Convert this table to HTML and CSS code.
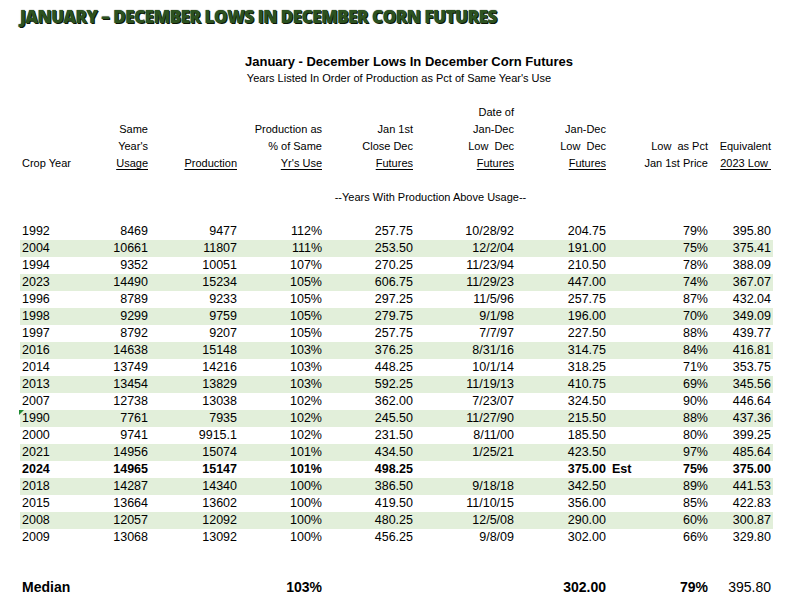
FILE: index.html
```html
<!DOCTYPE html>
<html>
<head>
<meta charset="utf-8">
<link rel="stylesheet" href="styles.css">
</head>
<body>
<h1 class="page-title">JANUARY – DECEMBER LOWS IN DECEMBER CORN FUTURES</h1>
<div class="sheet">
  <div class="t1">January - December Lows In December Corn Futures</div>
  <div class="t2">Years Listed In Order of Production as Pct of Same Year's Use</div>

  <div class="head">
    <div class="row hrow">
      <div class="c l"></div><div class="c"></div><div class="c"></div><div class="c"></div><div class="c"></div>
      <div class="c">Date of</div><div class="c"></div><div class="c"></div><div class="c"></div><div class="c"></div>
    </div>
    <div class="row hrow">
      <div class="c l"></div><div class="c">Same</div><div class="c"></div><div class="c">Production as</div><div class="c">Jan 1st</div>
      <div class="c">Jan-Dec</div><div class="c">Jan-Dec</div><div class="c"></div><div class="c"></div><div class="c"></div>
    </div>
    <div class="row hrow">
      <div class="c l"></div><div class="c">Year's</div><div class="c"></div><div class="c">% of Same</div><div class="c">Close Dec</div>
      <div class="c">Low&nbsp; Dec</div><div class="c">Low&nbsp; Dec</div><div class="c"></div><div class="c">Low&nbsp; as Pct</div><div class="c">Equivalent</div>
    </div>
    <div class="row hrow">
      <div class="c l">Crop Year</div><div class="c"><u>Usage</u></div><div class="c"><u>Production</u></div><div class="c"><u>Yr's Use</u></div><div class="c"><u>Futures</u></div>
      <div class="c"><u>Futures</u></div><div class="c"><u>Futures</u></div><div class="c"></div><div class="c">Jan 1st Price</div><div class="c"><u>2023 Low&nbsp;</u></div>
    </div>
  </div>

  <div class="section">--Years With Production Above Usage--</div>

  <div class="data">
    <div class="row"><div class="c l">1992</div><div class="c">8469</div><div class="c">9477</div><div class="c">112%</div><div class="c">257.75</div><div class="c">10/28/92</div><div class="c">204.75</div><div class="c"></div><div class="c">79%</div><div class="c">395.80</div></div>
    <div class="row g"><div class="c l">2004</div><div class="c">10661</div><div class="c">11807</div><div class="c">111%</div><div class="c">253.50</div><div class="c">12/2/04</div><div class="c">191.00</div><div class="c"></div><div class="c">75%</div><div class="c">375.41</div></div>
    <div class="row"><div class="c l">1994</div><div class="c">9352</div><div class="c">10051</div><div class="c">107%</div><div class="c">270.25</div><div class="c">11/23/94</div><div class="c">210.50</div><div class="c"></div><div class="c">78%</div><div class="c">388.09</div></div>
    <div class="row g"><div class="c l">2023</div><div class="c">14490</div><div class="c">15234</div><div class="c">105%</div><div class="c">606.75</div><div class="c">11/29/23</div><div class="c">447.00</div><div class="c"></div><div class="c">74%</div><div class="c">367.07</div></div>
    <div class="row"><div class="c l">1996</div><div class="c">8789</div><div class="c">9233</div><div class="c">105%</div><div class="c">297.25</div><div class="c">11/5/96</div><div class="c">257.75</div><div class="c"></div><div class="c">87%</div><div class="c">432.04</div></div>
    <div class="row g"><div class="c l">1998</div><div class="c">9299</div><div class="c">9759</div><div class="c">105%</div><div class="c">279.75</div><div class="c">9/1/98</div><div class="c">196.00</div><div class="c"></div><div class="c">70%</div><div class="c">349.09</div></div>
    <div class="row"><div class="c l">1997</div><div class="c">8792</div><div class="c">9207</div><div class="c">105%</div><div class="c">257.75</div><div class="c">7/7/97</div><div class="c">227.50</div><div class="c"></div><div class="c">88%</div><div class="c">439.77</div></div>
    <div class="row g"><div class="c l">2016</div><div class="c">14638</div><div class="c">15148</div><div class="c">103%</div><div class="c">376.25</div><div class="c">8/31/16</div><div class="c">314.75</div><div class="c"></div><div class="c">84%</div><div class="c">416.81</div></div>
    <div class="row"><div class="c l">2014</div><div class="c">13749</div><div class="c">14216</div><div class="c">103%</div><div class="c">448.25</div><div class="c">10/1/14</div><div class="c">318.25</div><div class="c"></div><div class="c">71%</div><div class="c">353.75</div></div>
    <div class="row g"><div class="c l">2013</div><div class="c">13454</div><div class="c">13829</div><div class="c">103%</div><div class="c">592.25</div><div class="c">11/19/13</div><div class="c">410.75</div><div class="c"></div><div class="c">69%</div><div class="c">345.56</div></div>
    <div class="row"><div class="c l">2007</div><div class="c">12738</div><div class="c">13038</div><div class="c">102%</div><div class="c">362.00</div><div class="c">7/23/07</div><div class="c">324.50</div><div class="c"></div><div class="c">90%</div><div class="c">446.64</div></div>
    <div class="row g"><div class="c l flag">1990</div><div class="c">7761</div><div class="c">7935</div><div class="c">102%</div><div class="c">245.50</div><div class="c">11/27/90</div><div class="c">215.50</div><div class="c"></div><div class="c">88%</div><div class="c">437.36</div></div>
    <div class="row"><div class="c l">2000</div><div class="c">9741</div><div class="c">9915.1</div><div class="c">102%</div><div class="c">231.50</div><div class="c">8/11/00</div><div class="c">185.50</div><div class="c"></div><div class="c">80%</div><div class="c">399.25</div></div>
    <div class="row g"><div class="c l">2021</div><div class="c">14956</div><div class="c">15074</div><div class="c">101%</div><div class="c">434.50</div><div class="c">1/25/21</div><div class="c">423.50</div><div class="c"></div><div class="c">97%</div><div class="c">485.64</div></div>
    <div class="row b"><div class="c l">2024</div><div class="c">14965</div><div class="c">15147</div><div class="c">101%</div><div class="c">498.25</div><div class="c"></div><div class="c">375.00</div><div class="c l est">Est</div><div class="c">75%</div><div class="c">375.00</div></div>
    <div class="row g"><div class="c l">2018</div><div class="c">14287</div><div class="c">14340</div><div class="c">100%</div><div class="c">386.50</div><div class="c">9/18/18</div><div class="c">342.50</div><div class="c"></div><div class="c">89%</div><div class="c">441.53</div></div>
    <div class="row"><div class="c l">2015</div><div class="c">13664</div><div class="c">13602</div><div class="c">100%</div><div class="c">419.50</div><div class="c">11/10/15</div><div class="c">356.00</div><div class="c"></div><div class="c">85%</div><div class="c">422.83</div></div>
    <div class="row g"><div class="c l">2008</div><div class="c">12057</div><div class="c">12092</div><div class="c">100%</div><div class="c">480.25</div><div class="c">12/5/08</div><div class="c">290.00</div><div class="c"></div><div class="c">60%</div><div class="c">300.87</div></div>
    <div class="row"><div class="c l">2009</div><div class="c">13068</div><div class="c">13092</div><div class="c">100%</div><div class="c">456.25</div><div class="c">9/8/09</div><div class="c">302.00</div><div class="c"></div><div class="c">66%</div><div class="c">329.80</div></div>
  </div>

  <div class="row median">
    <div class="c l nb">Median</div><div class="c"></div><div class="c"></div><div class="c nb">103%</div><div class="c"></div>
    <div class="c"></div><div class="c nb">302.00</div><div class="c"></div><div class="c nb">79%</div><div class="c nn">395.80</div>
  </div>
</div>
</body>
</html>
```
FILE: styles.css
```css
html, body {
  margin: 0;
  padding: 0;
  background: #ffffff;
}
body {
  width: 806px;
  height: 608px;
  overflow: hidden;
  font-family: "Liberation Sans", Arial, sans-serif;
  color: #000;
}
.page-title {
  margin: 0;
  padding: 7px 0 0 20px;
  font-family: "Open Sans", "DejaVu Sans", sans-serif;
  font-weight: 800;
  font-size: 17px;
  line-height: 20px;
  letter-spacing: -0.45px;
  color: #2c5220;
  text-shadow: 1px 1px 0 #0c1707, 0 0 1px #0c1707;
}
.sheet {
  margin-left: 20px;
  width: 753px;
}
.t1 {
  margin-top: 26px;
  padding-left: 25px;
  text-align: center;
  font-weight: bold;
  font-size: 13px;
  line-height: 17px;
}
.t2 {
  padding-left: 5px;
  text-align: center;
  font-size: 11px;
  line-height: 17px;
}
.head {
  margin-top: 17px;
}
.row {
  display: grid;
  grid-template-columns: 70px 58px 89px 85px 91px 101px 92px 34px 68px 65px;
  height: 17px;
  line-height: 17px;
}
.c {
  text-align: right;
  white-space: nowrap;
  position: relative;
}
.c.l {
  text-align: left;
  padding-left: 2px;
}
.c:last-child {
  padding-right: 2px;
}
.hrow {
  font-size: 11px;
}
.hrow u {
  text-decoration-thickness: 1px;
  text-underline-offset: 2px;
}
.section {
  margin-top: 17px;
  padding-left: 68px;
  text-align: center;
  font-size: 11px;
  line-height: 17px;
}
.data {
  margin-top: 17px;
}
.data .row {
  font-size: 12.5px;
}
.row.g {
  background: #e2efda;
}
.row.b {
  font-weight: bold;
}
.c.est {
  padding-left: 6px;
}
.flag::before {
  content: "";
  position: absolute;
  left: -1px;
  top: 0;
  width: 0;
  height: 0;
  border-top: 5px solid #1e8a32;
  border-right: 5px solid transparent;
}
.median {
  margin-top: 33px;
  font-size: 14px;
  font-family: "Liberation Sans Narrow", "Arial Narrow", "Liberation Sans", sans-serif;
}
.median .nb {
  font-weight: bold;
}
.median .nn {
  font-weight: normal;
}
```
